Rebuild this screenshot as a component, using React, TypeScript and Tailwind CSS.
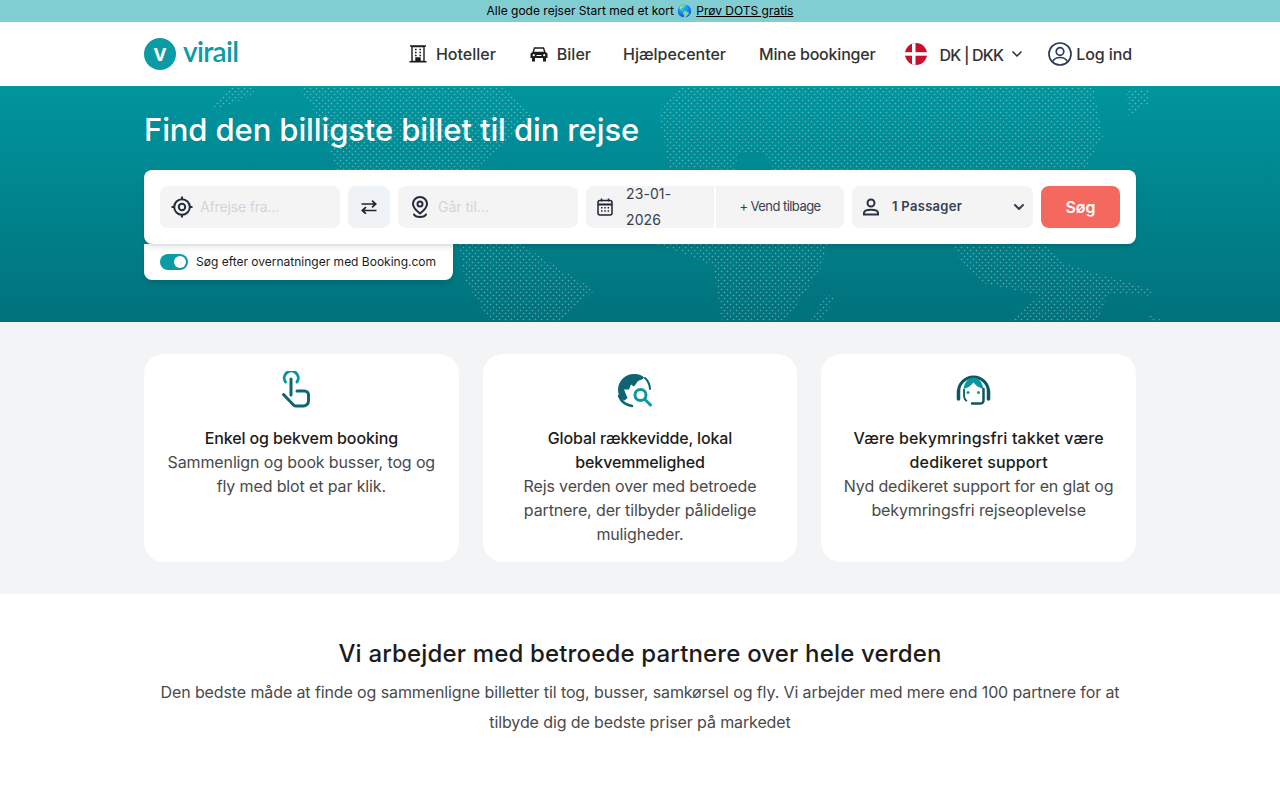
import React from "react";
import { ChevronDown } from "lucide-react";

const font = "font-['Inter','Noto_Sans',sans-serif]";

function Logo() {
  return (
    <div className="flex items-center gap-[7px]">
      <div className="w-8 h-8 rounded-full bg-[#0a9ba5] flex items-center justify-center text-white text-[23px] font-semibold leading-none pb-0.5">v</div>
      <span className="text-[28px] leading-none font-semibold text-[#0a9ba5] tracking-[-0.7px] font-['Lato',sans-serif] -mt-1.5">virail</span>
    </div>
  );
}

function Hotel() {
  return (
    <svg width="18" height="18" viewBox="0 0 18 18" fill="none" stroke="#1c1c1c" strokeWidth="1.400">
      <path d="M3 1.500h12v15H3zM0.500 16.800h17M1 1h16" />
      <path d="M6 4.500h1.600M10.400 4.500H12M6 7.500h1.600M10.400 7.500H12M6 10.500h1.600M10.400 10.500H12" strokeWidth="1.600" />
      <path d="M7 16.500v-3.500h4v3.500" fill="#1c1c1c" />
    </svg>
  );
}

function Car() {
  return (
    <svg width="18" height="15" viewBox="0 0 18 15" fill="none">
      <path d="M4.500 1h9L15 5.500H3z" stroke="#1c1c1c" strokeWidth="1.400" />
      <path d="M2 5.500h14a1.500 1.500 0 0 1 1.500 1.500v4h-17V7A1.500 1.500 0 0 1 2 5.500z" fill="#1c1c1c" />
      <path d="M2 11h3v3.500H2zM13 11h3v3.500h-3z" fill="#1c1c1c" />
      <path d="M6.500 8.500h5" stroke="#fff" strokeWidth="1" />
      <circle cx="3.800" cy="8.200" r="1.100" fill="#fff" />
      <circle cx="14.200" cy="8.200" r="1.100" fill="#fff" />
    </svg>
  );
}

function Flag() {
  return (
    <svg width="22" height="22" viewBox="0 0 22 22">
      <defs>
        <clipPath id="flagc"><circle cx="11" cy="11" r="11" /></clipPath>
      </defs>
      <g clipPath="url(#flagc)">
        <rect width="22" height="22" fill="#c8102e" />
        <rect x="7" width="3.500" height="22" fill="#fff" />
        <rect y="9.200" width="22" height="3.500" fill="#fff" />
      </g>
    </svg>
  );
}

function UserCircle() {
  return (
    <svg width="24" height="24" viewBox="0 0 24 24" fill="none" stroke="#2e3a59" strokeWidth="1.700">
      <circle cx="12" cy="12" r="11" />
      <circle cx="12" cy="9.500" r="3.800" />
      <path d="M4.800 19.500c1.200-3 3.800-4 7.200-4s6 1 7.200 4" />
    </svg>
  );
}

function Target() {
  return (
    <svg width="22" height="22" viewBox="0 0 22 22" fill="none" stroke="#232b3d" strokeWidth="2">
      <circle cx="11" cy="11" r="7.800" />
      <circle cx="11" cy="11" r="3.200" />
      <path d="M11 0.500v2.500M11 19v2.500M0.500 11H3M19 11h2.500" />
    </svg>
  );
}

function Pin() {
  return (
    <svg width="18" height="22" viewBox="0 0 18 22" fill="none" stroke="#232b3d" strokeWidth="2">
      <path d="M9 1a7 7 0 0 1 7 7c0 4-4 7-7 9.500C6 15 2 12 2 8a7 7 0 0 1 7-7z" />
      <circle cx="9" cy="8" r="2.500" />
      <path d="M3 18.500c.8 1.500 3 2.500 6 2.500s5.200-1 6-2.500" strokeLinecap="round" />
    </svg>
  );
}

function Swap() {
  return (
    <svg width="16" height="14" viewBox="0 0 16 14" fill="none" stroke="#1f2433" strokeWidth="1.700">
      <path d="M0.500 4h14M11 0.700 14.700 4 11 7.300" />
      <path d="M15.500 10.500h-14M5 7.200 1.300 10.500 5 13.800" />
    </svg>
  );
}

function Calendar() {
  return (
    <svg width="16" height="18" viewBox="0 0 16 18" fill="none" stroke="#1f2433" strokeWidth="1.500">
      <rect x="1" y="2.500" width="14" height="14.500" rx="2" />
      <path d="M1 6.500h14" strokeWidth="2" />
      <path d="M4.500 0.500v3M11.500 0.500v3" />
      <path d="M4 9.800h1.500M7.300 9.800h1.500M10.600 9.800h1.500M4 13h1.500M7.300 13h1.500M10.600 13h1.500" />
    </svg>
  );
}

function Person() {
  return (
    <svg width="18" height="18" viewBox="0 0 18 18" fill="none" stroke="#2b3245" strokeWidth="2">
      <circle cx="9" cy="5" r="3.500" />
      <path d="M2 16.500v-1.500c0-2 3-3.300 7-3.300s7 1.300 7 3.300v1.500z" />
    </svg>
  );
}

function Tap() {
  return (
    <svg width="34" height="38" viewBox="278 370 34 38" fill="none" strokeWidth="3" strokeLinecap="round" strokeLinejoin="round">
      <path d="M284.500 381a7 7 0 1 1 11.500 0" stroke="#0a97a1" />
      <path d="M290 378v16M282.500 393.500l10 10.500a3 3 0 0 0 2 1h7.500a5 5 0 0 0 5.500-5v-6a4 4 0 0 0-4-4h-7.500" stroke="#0e6470" />
    </svg>
  );
}

function GlobeSearch() {
  return (
    <svg width="37" height="36" viewBox="616 371 37 36" fill="none">
      <path d="M634 373c-9 0-16 7-16 16 0 3 1 6 3 9l3.500 1.500 3-2.500-3.500-8.500h5l2-5 3 2 4-5.500 5-2 1-1.500c-2-2-5-3.500-9-3.500z" fill="#0e6470" />
      <path d="M645 377a16 16 0 0 1 5 11" stroke="#0e6470" strokeWidth="2" strokeLinecap="round" />
      <path d="M619 395c2 5 7 9 13 10" stroke="#0e6470" strokeWidth="2.500" strokeLinecap="round" />
      <circle cx="640.500" cy="394" r="5.500" stroke="#0a97a1" strokeWidth="3" />
      <path d="M645 398.500l5.500 5.500" stroke="#0a97a1" strokeWidth="3" strokeLinecap="round" />
    </svg>
  );
}

function Support() {
  return (
    <svg width="36" height="34" viewBox="955 373 36 34" fill="none">
      <path d="M958.500 392a15 15 0 0 1 30 0" stroke="#0e5560" strokeWidth="3" />
      <path d="M963.500 389c1-7 5-11.500 10-11.500s9 4.500 10 11.500c-4-1-7.500-3-10-6.500-2.500 3.500-6 5.500-10 6.500z" fill="#0a97a1" />
      <circle cx="968" cy="392.500" r="1.500" fill="#0a97a1" />
      <circle cx="978.500" cy="392.500" r="1.500" fill="#0a97a1" />
      <path d="M964 389v6c0 3 1 5 3 6" stroke="#0e5560" strokeWidth="1.800" />
      <path d="M983.500 389v11a3 3 0 0 1-3 3.500h-8.500" stroke="#0e5560" strokeWidth="2.500" strokeLinecap="round" />
      <path d="M958.500 391v8" stroke="#0e5560" strokeWidth="3.500" strokeLinecap="round" />
      <path d="M988.500 391v8" stroke="#0e5560" strokeWidth="3.500" strokeLinecap="round" />
    </svg>
  );
}

function WorldDots() {
  const shapes = [
    "M208 108 L232 86 L258 86 L250 96 L215 110 Z",
    "M298 86 L500 86 L534 115 L475 170 L337 170 L320 120 Z",
    "M459 244 L520 244 L595 290 L560 322 L490 322 L465 280 Z",
    "M680 86 L1093 86 L1103 136 L1085 169 L775 170 L762 153 L738 153 L735 170 L669 168 L664 139 L658 114 Z",
    "M1126 89 L1150 89 L1148 104 L1128 116 Z",
    "M655 244 L828 244 L820 270 L800 300 L785 322 L722 322 L713 266 L680 252 Z",
    "M826 293 L834 299 L822 322 L810 322 Z",
    "M954 246 L1048 246 L1064 263 L1150 289 L1152 296 L1109 293 L1097 322 L1007 322 L1040 296 L983 283 L962 263 Z",
    "M1146 316 L1152 316 L1166 322 L1150 322 Z",
  ];
  return (
    <svg className="absolute inset-0 w-full h-full" width="1280" height="236" viewBox="0 86 1280 236">
      <defs>
        <pattern id="dots" width="6" height="6" patternUnits="userSpaceOnUse">
          <circle cx="1.500" cy="1.500" r="0.800" fill="#fff" fillOpacity="0.38" />
          <circle cx="4.500" cy="4.500" r="0.800" fill="#fff" fillOpacity="0.38" />
        </pattern>
      </defs>
      {shapes.map((d) => (
        <path key={d} d={d} fill="url(#dots)" />
      ))}
    </svg>
  );
}

function Card({ icon, title, body, wide }: { icon: React.ReactNode; title: string; body: string; wide?: boolean }) {
  return (
    <div className="bg-white rounded-[20px] h-[208px] px-5 pt-[17px] flex flex-col items-center text-center">
      <div className="h-[38px] mr-[11px] flex items-center justify-center">{icon}</div>
      <div className={`mt-[17px] text-base leading-6 font-medium text-[#1c1c1c] ${wide ? "tracking-[0.14px]" : "tracking-[-0.13px]"}`}>{title}</div>
      <div className="text-base leading-6 tracking-[-0.13px] text-[#4a4a4a]">{body}</div>
    </div>
  );
}

export default function App() {
  return (
    <div className={`${font} min-h-[800px] bg-white`}>
      <div className="h-[22px] bg-[#80cdd2] flex items-center justify-center gap-1 text-xs text-black">
        <span>Alle gode rejser Start med et kort 🌎</span>
        <span className="underline">Prøv DOTS gratis</span>
      </div>

      <header className="h-[64px] bg-white">
        <div className="w-[992px] mx-auto h-full flex items-center justify-between pr-1">
          <Logo />
          <nav className="flex items-center text-base font-medium text-[#333]">
            <a className="flex items-center gap-[9px]"><Hotel /><span>Hoteller</span></a>
            <a className="flex items-center gap-[9px] ml-[34px]"><Car /><span>Biler</span></a>
            <a className="ml-8">Hjælpecenter</a>
            <a className="ml-[33px] tracking-[-0.2px]">Mine bookinger</a>
            <a className="flex items-center ml-[30px]">
              <Flag />
              <span className="ml-3 mt-0.5 tracking-[-0.8px]">DK | DKK</span>
              <ChevronDown className="ml-1.5 w-4 h-4" strokeWidth={2.500} />
            </a>
            <a className="flex items-center gap-1 ml-[23px]"><UserCircle /><span className="tracking-[-0.1px]">Log ind</span></a>
          </nav>
        </div>
      </header>

      <section className="relative h-[236px] bg-gradient-to-b from-[#00959e] to-[#00727c] overflow-hidden">
        <WorldDots />
        <div className="relative w-[992px] mx-auto">
          <h1 className="pt-[24px] text-[31px] leading-10 font-medium tracking-[-0.12px] text-white">Find den billigste billet til din rejse</h1>
          <div className="mt-5 bg-white rounded-lg h-[74px] p-4 flex gap-2 shadow-md relative z-10">
            <div className="w-[180px] bg-[#f4f4f5] rounded-lg flex items-center pl-[11px] gap-[7px]">
              <Target />
              <span className="text-sm tracking-[-0.15px] text-[#d1d5db]">Afrejse fra...</span>
            </div>
            <div className="w-[42px] bg-[#eff3f6] rounded-lg flex items-center justify-center">
              <Swap />
            </div>
            <div className="w-[180px] bg-[#f4f4f5] rounded-lg flex items-center pl-[13px] gap-[9px]">
              <Pin />
              <span className="text-sm text-[#d1d5db]">Går til...</span>
            </div>
            <div className="w-[258px] flex gap-0.5">
              <div className="w-[128px] bg-[#f4f4f5] rounded-l-lg flex items-center pl-[11px] gap-[13px]">
                <Calendar />
                <span className="w-[60px] text-sm leading-[26px] tracking-[0.1px] text-[#374151]">23-01-2026</span>
              </div>
              <div className="flex-1 bg-[#f4f4f5] rounded-r-lg flex items-center justify-center text-[13px] tracking-[-0.55px] text-[#374151]">+ Vend tilbage</div>
            </div>
            <div className="w-[181px] bg-[#f4f4f5] rounded-lg flex items-center pl-[10px] pr-[6px]">
              <Person />
              <span className="ml-[12px] text-[13px] font-semibold tracking-[0.3px] text-[#374151]">1 Passager</span>
              <ChevronDown className="ml-auto w-4 h-4 text-[#374151]" strokeWidth={3} />
            </div>
            <button className="w-[79px] bg-[#f5685e] rounded-lg text-white text-base font-semibold">Søg</button>
          </div>
          <div className="w-[309px] h-9 bg-white rounded-b-lg shadow-md pl-4 flex items-center gap-2">
            <div className="w-7 h-4 rounded-full bg-[#0a9ba5] relative shrink-0">
              <div className="absolute right-[2px] top-[2px] w-3 h-3 rounded-full bg-white" />
            </div>
            <span className="text-xs text-[#1c1c1c]">Søg efter overnatninger med Booking.com</span>
          </div>
        </div>
      </section>

      <section className="bg-[#f3f4f6] h-[272px] pt-8">
        <div className="w-[992px] mx-auto grid grid-cols-3 gap-6">
          <Card icon={<Tap />} title="Enkel og bekvem booking" body="Sammenlign og book busser, tog og fly med blot et par klik." />
          <Card icon={<GlobeSearch />} title="Global rækkevidde, lokal bekvemmelighed" body="Rejs verden over med betroede partnere, der tilbyder pålidelige muligheder." />
          <Card icon={<Support />} wide title="Være bekymringsfri takket være dedikeret support" body="Nyd dedikeret support for en glat og bekymringsfri rejseoplevelse" />
        </div>
      </section>

      <section className="bg-white pt-[42px] text-center">
        <h2 className="text-2xl leading-9 font-medium tracking-[0.16px] text-[#1c1c1c]">Vi arbejder med betroede partnere over hele verden</h2>
        <p className="w-[992px] mx-auto mt-[5px] text-base leading-[30px] tracking-[-0.11px] text-[#4a4a4a]">Den bedste måde at finde og sammenligne billetter til tog, busser, samkørsel og fly. Vi arbejder med mere end 100 partnere for at tilbyde dig de bedste priser på markedet</p>
      </section>
    </div>
  );
}
